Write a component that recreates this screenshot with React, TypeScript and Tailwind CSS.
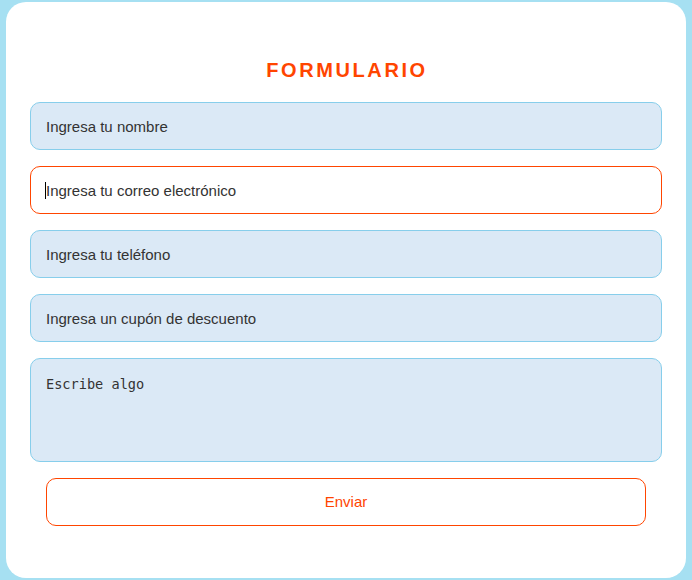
import React from "react";

export default function App() {
  const inputCls =
    "h-[48px] w-full rounded-[10px] border border-[#87ceeb] bg-[#dbe9f6] px-[15px] text-[15px] text-[#333] outline-none placeholder:text-[#333]";
  return (
    <div className="min-h-[580px] w-[692px] bg-[#a6e0f2] px-[6px] pt-[2px]" style={{ fontFamily: '"Liberation Sans", Arial, sans-serif' }}>
      <div className="flex h-[576px] w-[680px] flex-col rounded-[20px] bg-white px-[24px] pt-[54px]">
        <h1 className="mb-[18px] h-[28px] pl-[2px] text-center text-[20px] font-bold leading-[28px] tracking-[2.6px] text-[#ff4500]">
          FORMULARIO
        </h1>
        <div className="flex flex-col gap-[16px]">
          <input className={inputCls} placeholder="Ingresa tu nombre" />
          <div className="relative">
            <input
              className="h-[48px] w-full rounded-[10px] border border-[#ff4500] bg-white px-[15px] text-[15px] text-[#333] outline-none placeholder:text-[#333]"
              placeholder="Ingresa tu correo electrónico"
            />
            <span className="pointer-events-none absolute left-[15px] top-[16px] h-[17px] w-px bg-black" />
          </div>
          <input className={inputCls} placeholder="Ingresa tu teléfono" />
          <input className={inputCls} placeholder="Ingresa un cupón de descuento" />
          <textarea
            className="h-[104px] w-full resize-none rounded-[10px] border border-[#87ceeb] bg-[#dbe9f6] px-[15px] py-[15px] text-[13.6px] text-[#333] outline-none placeholder:text-[#333]"
            style={{ fontFamily: '"DejaVu Sans Mono", monospace' }}
            placeholder="Escribe algo"
          />
          <div className="px-[16px]">
            <button className="h-[48px] w-full rounded-[10px] border border-[#ff4500] bg-white text-[15px] text-[#ff4500]">
              Enviar
            </button>
          </div>
        </div>
      </div>
    </div>
  );
}
